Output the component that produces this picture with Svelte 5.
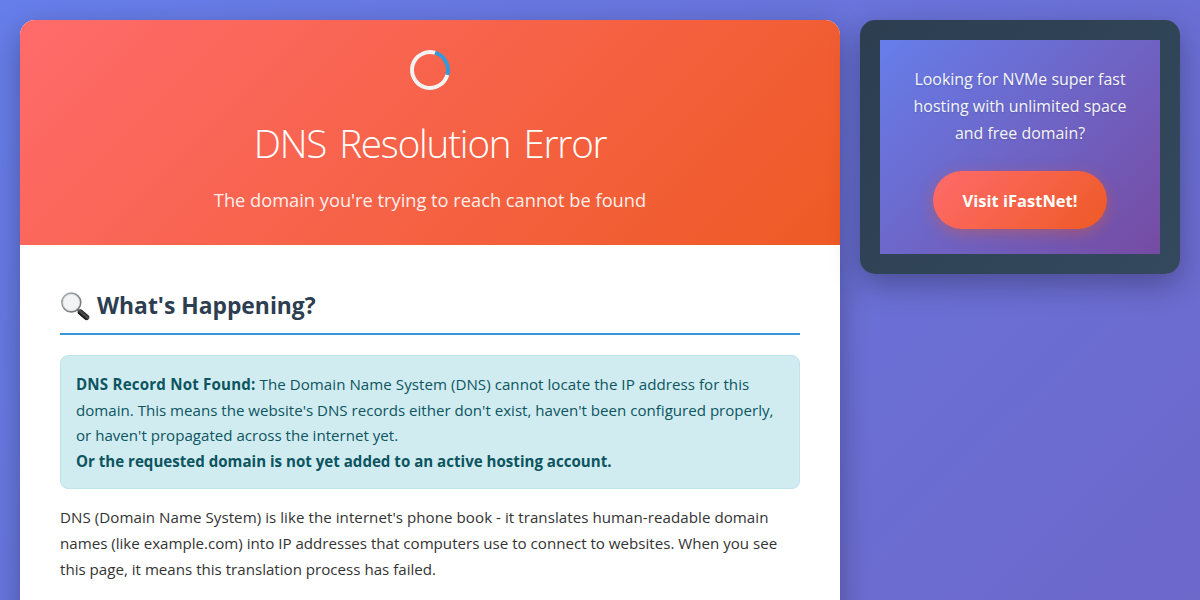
<script>
  const infoLines = [
    "domain. This means the website's DNS records either don't exist, haven't been configured properly,",
    "or haven't propagated across the internet yet."
  ];

  const adUrl = '#ifastnet';
</script>

<div class="page">
  <main class="card">
    <header class="card-header">
      <div class="spinner"></div>
      <h1>DNS Resolution Error</h1>
      <p>The domain you're trying to reach cannot be found</p>
    </header>

    <section class="content">
      <h2>
        <svg viewBox="0 0 30 30" aria-hidden="true">
          <defs>
            <linearGradient id="handle" x1="0" y1="1" x2="1" y2="0">
              <stop offset="0.25" stop-color="#111" />
              <stop offset="0.55" stop-color="#555" />
              <stop offset="0.8" stop-color="#222" />
            </linearGradient>
            <linearGradient id="rim" x1="0" y1="0" x2="1" y2="1">
              <stop offset="0" stop-color="#aeb1b5" />
              <stop offset="1" stop-color="#66696d" />
            </linearGradient>
          </defs>
          <path d="M17.5 18.3 L20.5 21.2" stroke="#777" stroke-width="2.4" />
          <path d="M20.4 21.1 L26.6 26.4" stroke="url(#handle)" stroke-width="5.4" stroke-linecap="round" />
          <circle cx="11.3" cy="11.5" r="9.4" fill="#f1f3f4" stroke="url(#rim)" stroke-width="1.7" />
          <circle cx="11.3" cy="11.5" r="8.2" fill="none" stroke="#dadddf" stroke-width="0.7" />
        </svg>
        <span>What's Happening?</span>
      </h2>

      <div class="info">
        <strong class="lead">DNS Record Not Found:</strong> <span class="wide">The Domain Name System (DNS) cannot locate the IP address for this</span><br />
        {#each infoLines as line}
          {line}<br />
        {/each}
        <strong>Or the requested domain is not yet added to an active hosting account.</strong>
      </div>

      <p class="text">
        <span class="wide">DNS (Domain Name System) is like the internet's phone book - it translates human-readable domain</span><br />
        names (like example.com) into IP addresses that computers use to connect to websites. When you see<br />
        this page, it means this translation process has failed.
      </p>
    </section>
  </main>

  <aside class="sidebar">
    <div class="ad">
      <p>Looking for NVMe super fast<br />hosting with unlimited space<br />and free domain?</p>
      <a class="button" href={adUrl}>Visit iFastNet!</a>
    </div>
  </aside>
</div>

<style>
  :global(body) {
    margin: 0;
    overflow: hidden;
  }

  .page {
    box-sizing: border-box;
    display: flex;
    align-items: flex-start;
    gap: 20px;
    height: 600px;
    padding: 20px;
    overflow: hidden;
    background: linear-gradient(135deg, #667eea 0%, #764ba2 100%) 0 0 / 1200px 2890px no-repeat;
    font-family: "Open Sans", "Noto Sans", sans-serif;
    font-size: 15.1px;
    line-height: 25.6px;
    color: #333;
  }

  .card {
    flex: 1;
    min-height: 1000px;
    border-radius: 15px;
    overflow: hidden;
    background: #fff;
    box-shadow: 0 10px 30px rgba(0, 0, 0, 0.3);
  }

  .card-header {
    padding: 31px 30px 29px;
    text-align: center;
    color: #fff;
    background: linear-gradient(135deg, #ff6b6b 0%, #ee5a24 100%);
  }

  .spinner {
    box-sizing: border-box;
    width: 40px;
    height: 40px;
    margin: -1px auto 21px;
    border: 4px solid #f3f3f3;
    border-top-color: #3498db;
    border-radius: 50%;
    transform: rotate(61deg);
  }

  h1 {
    margin: 0 0 10px;
    font-size: 38.6px;
    font-weight: 300;
    line-height: 64px;
    letter-spacing: -1.2px;
    word-spacing: 4.2px;
  }

  .card-header p {
    margin: 0;
    font-size: 18.25px;
    line-height: 30.7px;
    opacity: 0.9;
  }

  .content {
    padding: 40px;
  }

  h2 {
    display: flex;
    align-items: center;
    gap: 7px;
    margin: 0 0 20px;
    padding: 3px 0 9px;
    border-bottom: 2px solid #3498db;
    font-size: 22.85px;
    line-height: 36.4px;
    color: #2c3e50;
  }

  h2 svg {
    width: 30px;
    height: 30px;
  }

  .info {
    margin-bottom: 15px;
    padding: 16px 15px 14px;
    border: 1px solid #bee5eb;
    border-radius: 8px;
    background: #d1ecf1;
    color: #0c5460;
    white-space: nowrap;
  }

  .lead {
    letter-spacing: 0.2px;
  }

  .wide {
    letter-spacing: 0.05px;
  }

  .text {
    margin: 0;
    padding-top: 1px;
    font-size: 15.12px;
    white-space: nowrap;
  }

  .sidebar {
    box-sizing: border-box;
    width: 320px;
    padding: 20px;
    border-radius: 15px;
    background: linear-gradient(135deg, #2c3e50 0%, #34495e 100%);
    box-shadow: 0 10px 30px rgba(0, 0, 0, 0.3);
  }

  .ad {
    padding: 26px 25px 25px;
    text-align: center;
    background: linear-gradient(135deg, #667eea 0%, #764ba2 100%);
  }

  .ad p {
    margin: 0 0 23px;
    font-size: 15.95px;
    line-height: 27.2px;
    color: #f4f6f8;
    white-space: nowrap;
    text-shadow: 0 1px 2px rgba(0, 0, 0, 0.15);
  }

  .button {
    display: inline-block;
    padding: 16px 29.3px 14px;
    border-radius: 50px;
    background: linear-gradient(135deg, #ff6b6b 0%, #ee5a24 100%);
    box-shadow: 0 4px 15px rgba(238, 90, 36, 0.4);
    font-size: 16.5px;
    font-weight: 700;
    line-height: 28.2px;
    color: #fff;
    text-decoration: none;
    vertical-align: top;
  }
</style>
